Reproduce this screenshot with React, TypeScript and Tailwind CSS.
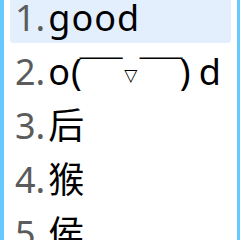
import React from "react";

function Macron() {
  return (
    <span className="inline-block w-[38px] text-center">
      <span className="inline-block scale-x-[1.2] translate-y-[5px]">￣</span>
    </span>
  );
}

function Kaomoji() {
  return (
    <span className="inline-flex items-end">
      <span>o</span>
      <span className="ml-[1px]">(</span>
      <Macron />
      <span className="inline-block w-[22px] text-center text-[17px] mb-[6px]" style={{ fontFamily: '"DejaVu Sans", sans-serif' }}>▽</span>
      <Macron />
      <span>)</span>
      <span className="ml-[8px]">d</span>
    </span>
  );
}

const items: React.ReactNode[] = [
  <span key="g" className="tracking-[1px]">good</span>,
  <Kaomoji key="k" />,
  "后",
  "猴",
  "侯",
];

export default function App() {
  return (
    <div className="w-[240px] h-[240px] overflow-hidden bg-white border-l-[4px] border-r-[3px] border-[#66c9ff]">
      <div className="-mt-[11px] px-[6px] flex flex-col" style={{ fontFamily: '"Noto Sans", "Noto Sans CJK SC", sans-serif' }}>
        {items.map((t, i) => (
          <div
            key={i}
            className={`h-[54px] flex items-end pb-[7px] pl-[5px] rounded-[3px] text-[36px] leading-none whitespace-nowrap ${i === 0 ? "bg-[#e3effd]" : ""}`}
          >
            <span className="text-[#5b5b5b]">{i + 1}.</span>
            <span className="text-black ml-[3px]">{t}</span>
          </div>
        ))}
      </div>
    </div>
  );
}
